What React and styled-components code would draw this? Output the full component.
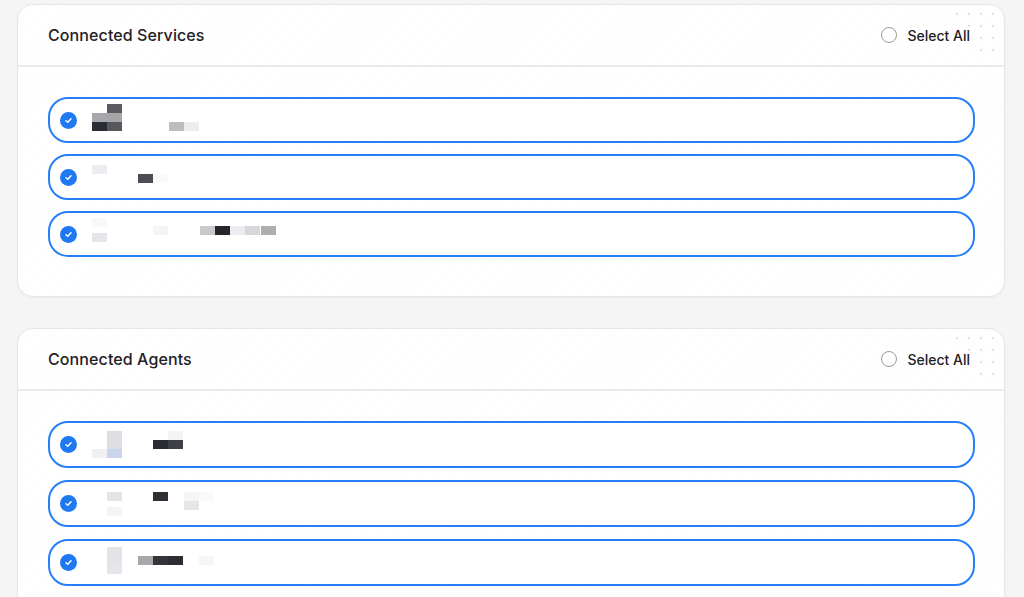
import styled, { createGlobalStyle } from 'styled-components';

const GlobalStyle = createGlobalStyle`
    html, body {
        margin: 0;
        padding: 0;
        background: #f5f5f5;
        font-family: Inter, "Open Sans", "Liberation Sans", sans-serif;
        color: #1f2127;
    }
`

const Page = styled.div`
    display: flex;
    flex-direction: column;
    gap: 31px;
    padding: 4px 19px 40px 17px;
`

const Card = styled.section`
    position: relative;
    background: #ffffff repeating-linear-gradient(-45deg, rgba(0,0,0,0.005) 0 6px, transparent 6px 12px);
    border: 1px solid #e6e6e8;
    border-radius: 16px;
    box-shadow: 0 1px 3px rgba(0,0,0,0.04);
    overflow: hidden;
`

const CardHeader = styled.header`
    display: flex;
    align-items: center;
    justify-content: space-between;
    height: ${props => props.$height}px;
    padding: 0 34px 0 30px;
    border-bottom: 2px solid #ebebeb;
`

const Title = styled.h2`
    margin: 0;
    font-size: 16px;
    font-weight: 450;
    letter-spacing: 0.1px;
`

const SelectAll = styled.label`
    display: flex;
    align-items: center;
    gap: 10px;
    font-size: 14px;
    font-weight: 450;
    position: relative;
    z-index: 1;
`

const Radio = styled.span`
    width: 14px;
    height: 14px;
    border-radius: 50%;
    border: 1px solid #9a9a9e;
    background: #fff;
`

const Dots = styled.div`
    position: absolute;
    top: 3px;
    right: 5px;
    display: grid;
    grid-template-columns: repeat(4, 12px);
    grid-auto-rows: 12px;
    pointer-events: none;
`

const Dot = styled.span`
    justify-self: center;
    align-self: center;
    width: 2px;
    height: 2px;
    border-radius: 50%;
    background: ${props => props.$on ? '#d6d6d8' : 'transparent'};
`

const List = styled.div`
    display: flex;
    flex-direction: column;
    gap: ${props => props.$gap}px;
    padding: 30px 29px 39px 30px;
`

const Item = styled.div`
    display: flex;
    align-items: center;
    height: ${props => props.$height}px;
    box-sizing: border-box;
    padding: 0 10px;
    border: 2px solid #2580f7;
    border-radius: 20px;
    background: #fff;
`

const Check = styled.span`
    flex: none;
    width: 17px;
    height: 17px;
    border-radius: 50%;
    background: #1f7af2;
    display: flex;
    align-items: center;
    justify-content: center;
`

const Redacted = styled.div`
    position: relative;
    margin-left: 15px;
    height: 36px;
    width: 200px;
`

const Pixel = styled.span`
    position: absolute;
    width: 15px;
    height: 9px;
`

const CheckMark = () => (
    <Check>
        <svg width="9" height="9" viewBox="0 0 10 10">
            <path d="M2.2 5.2 L4.2 7 L7.8 3" fill="none" stroke="#fff" strokeWidth="1.6" strokeLinecap="round" strokeLinejoin="round" />
        </svg>
    </Check>
)

// pixelated redaction blocks: [x, y, colour]
const services = [
    [[15, 2, '#5d5b61'], [0, 11, '#a9a7ab'], [15, 11, '#a6a5a8'], [0, 20, '#2a2c33'], [15, 20, '#58575c'], [77, 20, '#bdbcbe'], [92, 20, '#ededf0']],
    [[0, 6, '#ebebf0'], [46, 15, '#4c4c52'], [61, 15, '#fafafa']],
    [[0, 2, '#f8f8f8'], [0, 17, '#e6e6ea'], [61, 10, '#f4f4f5'], [108, 10, '#c9c9cb'], [123, 10, '#24262c'], [138, 10, '#ececf0'], [153, 10, '#d7d7d9'], [169, 10, '#aeadb0']],
]

const agents = [
    [[15, 4, '#dedee2'], [15, 13, '#dedee2'], [0, 22, '#f0f0f3'], [15, 22, '#c9d5ec'], [61, 13, '#2a2c33'], [76, 13, '#3f3f45'], [76, 4, '#f4f4f5']],
    [[15, 6, '#e4e4e8'], [15, 21, '#f4f4f6'], [61, 6, '#2e3036'], [92, 6, '#f5f5f6'], [92, 15, '#e6e6ea'], [107, 6, '#fafafa']],
    [[15, 2, '#e4e4e8'], [15, 11, '#e4e4e8'], [15, 20, '#e6e6ea'], [46, 11, '#a8a7aa'], [61, 11, '#33353b'], [76, 11, '#2b2d33'], [107, 11, '#f6f6f7']],
]

const Section = ({ title, headerHeight, gap, itemHeight, rows }) => (
    <Card>
        <Dots>
            {[1,1,1,1, 0,1,1,1, 0,0,1,1, 0,0,1,1].map((on, i) => <Dot key={i} $on={on} />)}
        </Dots>
        <CardHeader $height={headerHeight}>
            <Title>{title}</Title>
            <SelectAll>
                <Radio />
                Select All
            </SelectAll>
        </CardHeader>
        <List $gap={gap}>
            {rows.map((blocks, i) => (
                <Item key={i} $height={itemHeight}>
                    <CheckMark />
                    <Redacted>
                        {blocks.map(([x, y, c], j) => (
                            <Pixel key={j} style={{ left: x, top: y, background: c }} />
                        ))}
                    </Redacted>
                </Item>
            ))}
        </List>
    </Card>
)

const App = () => {
    return (
        <>
            <GlobalStyle />
            <Page>
                <Section title="Connected Services" headerHeight={60} gap={11} itemHeight={46} rows={services} />
                <Section title="Connected Agents" headerHeight={60} gap={12} itemHeight={47} rows={agents} />
            </Page>
        </>
    )
}

export default App
